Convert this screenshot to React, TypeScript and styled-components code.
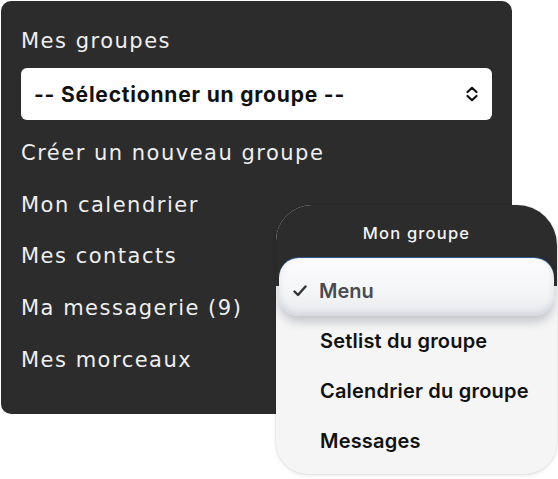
import React from "react";
import styled, { createGlobalStyle } from "styled-components";

const Global = createGlobalStyle`
  html, body { margin: 0; padding: 0; background: #ffffff; }
  #root { width: 558px; height: 479px; }
`;

const Page = styled.div`
  position: relative;
  width: 558px;
  height: 479px;
  padding: 1px 0 0 1px;
  box-sizing: border-box;
  overflow: hidden;
`;

const Panel = styled.nav`
  width: 511px;
  height: 413px;
  box-sizing: border-box;
  background: #2c2c2c;
  border-radius: 10px;
  padding: 14px 20px 0 20px;
  display: flex;
  flex-direction: column;
`;

const Title = styled.div`
  height: 51px;
  display: flex;
  align-items: center;
  font-family: "DejaVu Sans", sans-serif;
  font-size: 21px;
  letter-spacing: 1.5px;
  color: #efefef;
`;

const Select = styled.div`
  margin-top: 2px;
  height: 52px;
  background: #ffffff;
  border-radius: 6px;
  padding: 0 13px;
  display: flex;
  align-items: center;
  justify-content: space-between;
  font-family: Inter, sans-serif;
  font-weight: 700;
  font-size: 21px;
  letter-spacing: 0.8px;
  color: #111;
`;

const Links = styled.div`
  margin-top: 7px;
  display: flex;
  flex-direction: column;
`;

const LinkItem = styled.div`
  height: 51.8px;
  display: flex;
  align-items: center;
  font-family: "DejaVu Sans", sans-serif;
  font-size: 21px;
  letter-spacing: 1.5px;
  color: #efefef;
`;

const Sheet = styled.div`
  position: absolute;
  left: 276px;
  top: 205px;
  width: 281px;
  height: 269px;
  border-radius: 36px 40px 32px 32px;
  background: #f5f5f5;
  overflow: hidden;
  box-shadow: 0 0 0 1px rgba(0, 0, 0, 0.05), 0 2px 4px rgba(0, 0, 0, 0.08);
  display: flex;
  flex-direction: column;
`;

const SheetHeader = styled.div`
  height: 52px;
  background: #2c2c2c;
  display: flex;
  align-items: center;
  justify-content: center;
  padding-top: 4px;
  box-sizing: border-box;
  font-family: Inter, sans-serif;
  font-weight: 500;
  font-size: 16.5px;
  letter-spacing: 1.2px;
  color: #f4f4f4;
`;

const SelectedWrap = styled.div`
  background: linear-gradient(#2c2c2c 0 50%, #f5f5f5 50% 100%);
  padding: 0 3px;
`;

const Highlight = styled.div`
  border-top: 3px solid #2e5b95;
  border-radius: 20px;
`;

const Pill = styled.div`
  margin-top: -2px;
  height: 58px;
  box-sizing: border-box;
  padding-top: 7px;
  border-radius: 20px;
  background: linear-gradient(180deg, #fbfbfc 0%, #f4f5f7 60%, #e7e9ed 100%);
  box-shadow: 0 6px 10px rgba(40, 50, 70, 0.24), inset 0 -3px 6px rgba(120, 130, 150, 0.2);
  display: flex;
  align-items: center;
  padding-left: 14px;
  gap: 12px;
  font-family: Inter, sans-serif;
  font-weight: 600;
  font-size: 20px;
  color: #4a4b50;
`;

const Option = styled.div`
  height: 50px;
  display: flex;
  align-items: center;
  padding-left: 44px;
  font-family: Inter, sans-serif;
  font-weight: 600;
  font-size: 20px;
  letter-spacing: 0.2px;
  color: #111;
`;

const ChevronIcon = () => (
  <svg width="14" height="16" viewBox="0 0 14 16" fill="none">
    <path d="M2.5 6 L7 1.8 L11.5 6" stroke="#111" strokeWidth="2.2" strokeLinecap="round" strokeLinejoin="round" />
    <path d="M2.5 10 L7 14.2 L11.5 10" stroke="#111" strokeWidth="2.2" strokeLinecap="round" strokeLinejoin="round" />
  </svg>
);

const CheckIcon = () => (
  <svg width="14" height="12" viewBox="0 0 14 12" fill="none">
    <path d="M1.5 6.5 L5 10 L12.5 1.5" stroke="#333" strokeWidth="2.4" strokeLinecap="round" strokeLinejoin="round" />
  </svg>
);

const links = [
  "Créer un nouveau groupe",
  "Mon calendrier",
  "Mes contacts",
  "Ma messagerie (9)",
  "Mes morceaux",
];

const options = ["Setlist du groupe", "Calendrier du groupe", "Messages"];

export default function App() {
  return (
    <Page>
      <Global />
      <Panel>
        <Title>Mes groupes</Title>
        <Select>
          <span>-- Sélectionner un groupe --</span>
          <ChevronIcon />
        </Select>
        <Links>
          {links.map((l) => (
            <LinkItem key={l}>{l}</LinkItem>
          ))}
        </Links>
      </Panel>
      <Sheet>
        <SheetHeader>Mon groupe</SheetHeader>
        <SelectedWrap>
          <Highlight>
            <Pill>
              <CheckIcon />
              <span>Menu</span>
            </Pill>
          </Highlight>
        </SelectedWrap>
        {options.map((o) => (
          <Option key={o}>{o}</Option>
        ))}
      </Sheet>
    </Page>
  );
}
